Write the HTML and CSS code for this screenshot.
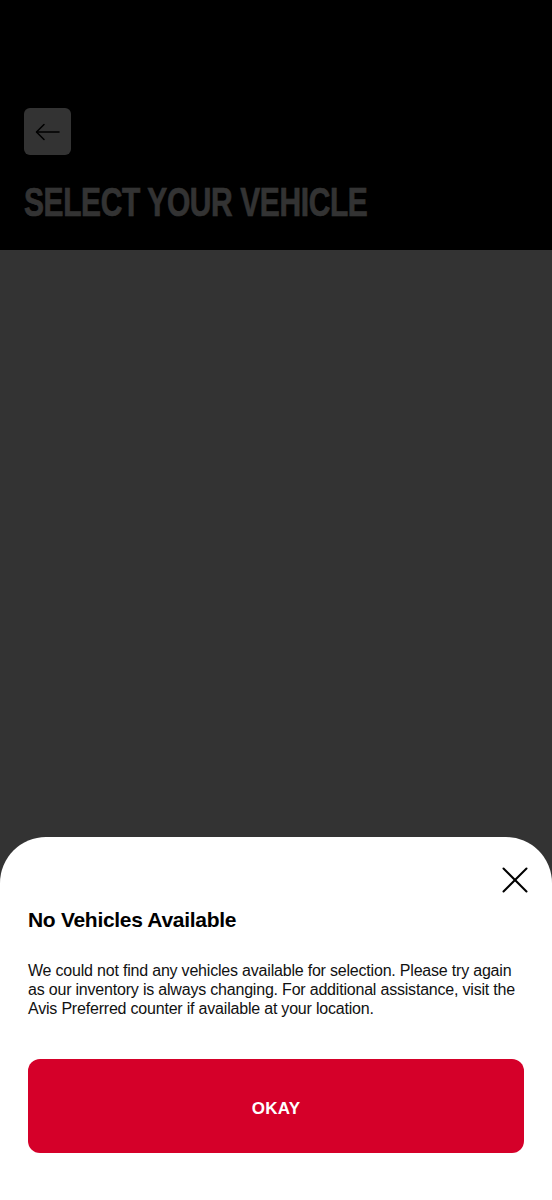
FILE: index.html
```html
<!DOCTYPE html>
<html lang="en">
<head>
    <meta charset="UTF-8">
    <meta name="viewport" content="width=device-width, initial-scale=1.0">
    <title>Select Your Vehicle</title>
    <link rel="stylesheet" href="styles.css">
</head>
<body>
    <div class="page">
        <!-- Header -->
        <header class="header">
            <button class="back-btn" aria-label="Back">
                <svg width="26" height="18" viewBox="0 0 26 18" fill="none" stroke="#000" stroke-width="1.6" stroke-linecap="round" stroke-linejoin="round">
                    <path d="M24 9H2"/>
                    <path d="M9 1.5L1.5 9L9 16.5"/>
                </svg>
            </button>
            <h1 class="title">SELECT YOUR VEHICLE</h1>
        </header>
        <main class="content"></main>
    </div>

    <!-- Dimmed overlay + bottom sheet -->
    <div class="overlay"></div>
    <div class="sheet">
        <div class="sheet-top">
            <button class="close-btn" aria-label="Close">
                <svg width="26" height="26" viewBox="0 0 26 26" fill="none" stroke="#000" stroke-width="2" stroke-linecap="round">
                    <path d="M1.5 1.5L24.5 24.5"/>
                    <path d="M24.5 1.5L1.5 24.5"/>
                </svg>
            </button>
        </div>
        <h2 class="sheet-title">No Vehicles Available</h2>
        <p class="sheet-text">We could not find any vehicles available for selection. Please try again as our inventory is always changing. For additional assistance, visit the Avis Preferred counter if available at your location.</p>
        <button class="okay-btn">OKAY</button>
    </div>
</body>
</html>
```

FILE: styles.css
```css
* {
    box-sizing: border-box;
}

body {
    margin: 0;
    font-family: "Liberation Sans", Arial, sans-serif;
    background: #fff;
    width: 552px;
    height: 1200px;
    overflow: hidden;
}

.page {
    display: flex;
    flex-direction: column;
    height: 1200px;
}

.header {
    background: #000;
    height: 250px;
    padding: 108px 24px 0;
}

.back-btn {
    width: 47px;
    height: 47px;
    background: #fff;
    border: none;
    border-radius: 6px;
    display: flex;
    align-items: center;
    justify-content: center;
    padding: 0;
}

.title {
    margin: 25px 0 0;
    color: #fff;
    font-family: "Liberation Sans Narrow", "Liberation Sans", sans-serif;
    font-weight: 700;
    font-size: 41px;
    line-height: 44px;
    letter-spacing: -0.5px;
    transform: scaleX(0.73);
    transform-origin: left center;
    white-space: nowrap;
    -webkit-text-stroke: 0.6px #fff;
}

.content {
    flex: 1;
    background: #fff;
}

.overlay {
    position: fixed;
    inset: 0;
    background: rgba(0, 0, 0, 0.8);
}

.sheet {
    position: fixed;
    left: 0;
    right: 0;
    bottom: 0;
    height: 363px;
    background: #fff;
    border-radius: 46px 46px 0 0;
    padding: 30px 28px 0;
}

.sheet-top {
    display: flex;
    justify-content: flex-end;
    margin-right: -4px;
}

.close-btn {
    background: none;
    border: none;
    padding: 0;
    width: 26px;
    height: 26px;
}

.sheet-title {
    margin: 15px 0 0;
    font-size: 21px;
    font-weight: 600;
    color: #000;
    letter-spacing: -0.3px;
}

.sheet-text {
    margin: 29px 0 0;
    font-size: 16px;
    line-height: 19px;
    color: #111;
    letter-spacing: -0.2px;
}

.okay-btn {
    display: block;
    width: 496px;
    height: 94px;
    margin-top: 41px;
    padding-top: 6px;
    background: #d50029;
    color: #fff;
    border: none;
    border-radius: 12px;
    font-family: "Liberation Sans", Arial, sans-serif;
    font-weight: 700;
    font-size: 17px;
    letter-spacing: 0.2px;
}
```
